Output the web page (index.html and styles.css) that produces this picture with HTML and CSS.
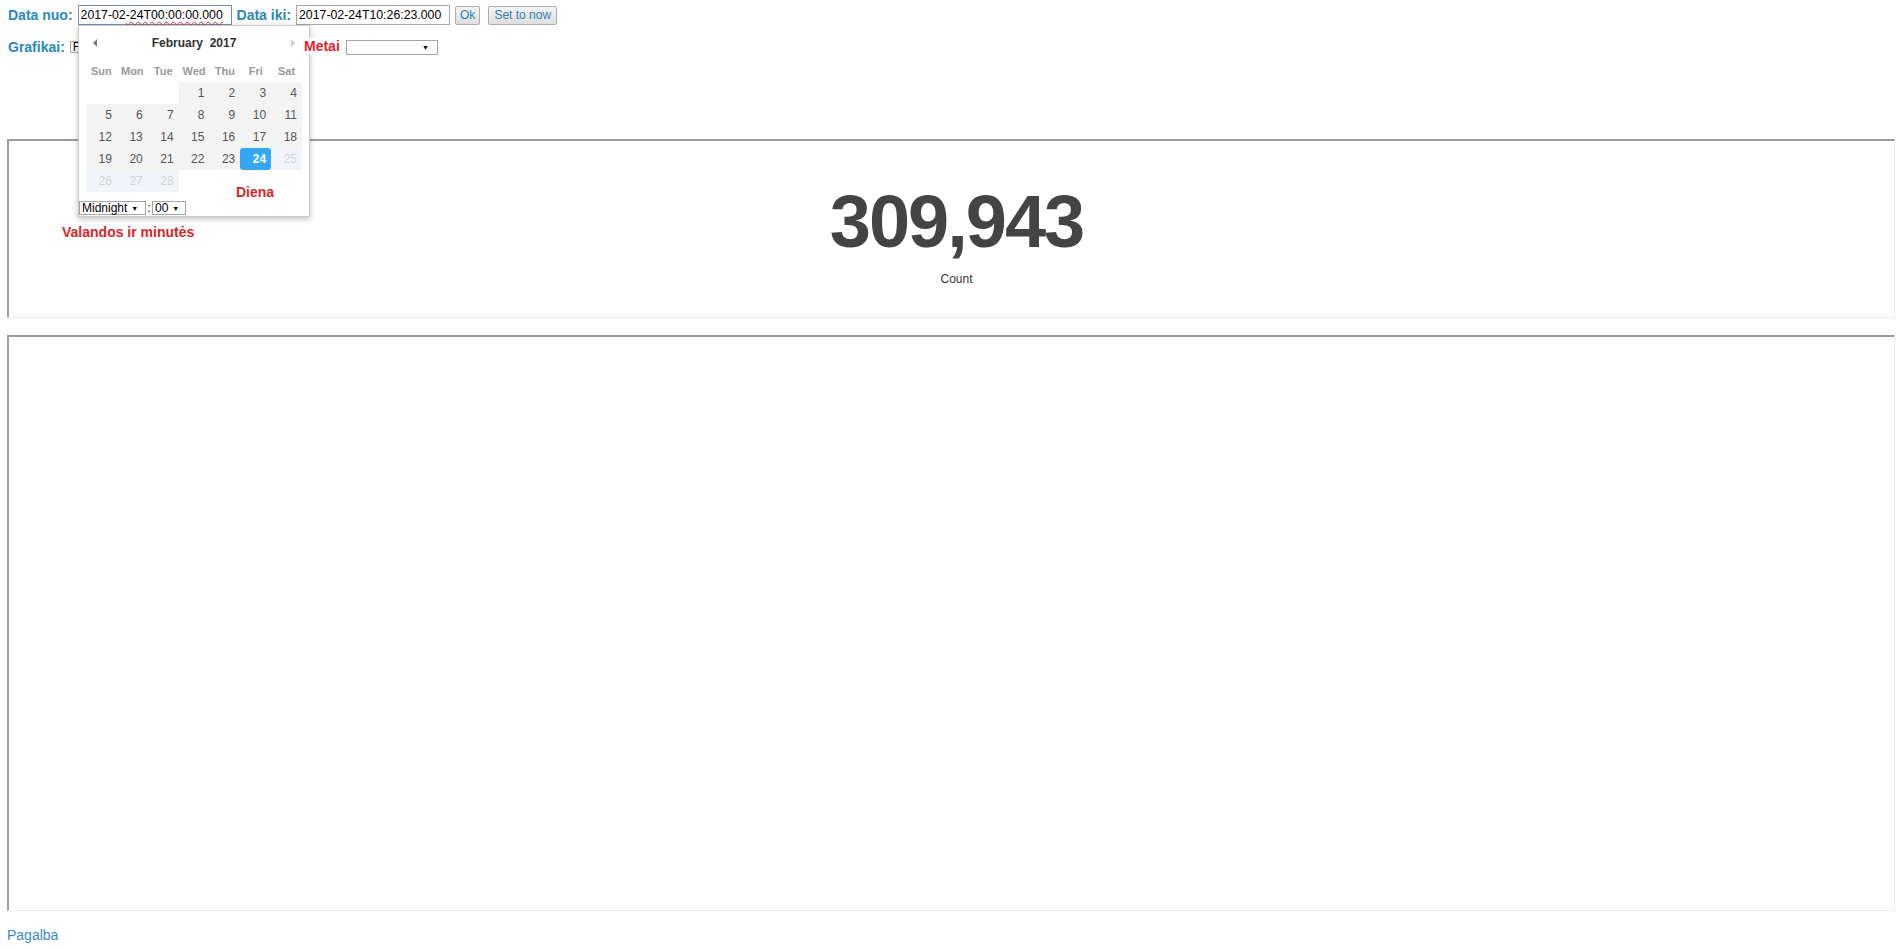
FILE: index.html
```html
<!DOCTYPE html>
<html lang="lt">
<head>
  <meta charset="UTF-8" />
  <meta name="viewport" content="width=device-width, initial-scale=1.0" />
  <title>Statistika</title>
  <link rel="stylesheet" href="styles.css">
</head>
<body>
  <div class="filters">
    <div class="row">
      <label>Data nuo:</label>
      <span class="field">
        <input class="date focused" type="text" value="2017-02-24T00:00:00.000">
        <span class="spell">2017-02<u>-24T00:00:00.000</u></span>
      </span>
      <label>Data iki:</label>
      <input class="date" type="text" value="2017-02-24T10:26:23.000">
      <button class="btn">Ok</button>
      <button class="btn now">Set to now</button>
    </div>
    <div class="row row-2">
      <label>Grafikai:</label>
      <div class="select charts">F</div>
      <div class="select years"><span></span><i>▼</i></div>
    </div>

    <div class="datepicker">
      <div class="dp-head">
        <span class="dp-prev"></span>
        <span class="dp-title">February&nbsp; 2017</span>
        <span class="dp-next"></span>
      </div>
      <table class="dp-days">
        <tr><th>Sun</th><th>Mon</th><th>Tue</th><th>Wed</th><th>Thu</th><th>Fri</th><th>Sat</th></tr>
        <tr><td class="empty"></td><td class="empty"></td><td class="empty"></td><td>1</td><td>2</td><td>3</td><td>4</td></tr>
        <tr><td>5</td><td>6</td><td>7</td><td>8</td><td>9</td><td>10</td><td>11</td></tr>
        <tr><td>12</td><td>13</td><td>14</td><td>15</td><td>16</td><td>17</td><td>18</td></tr>
        <tr><td>19</td><td>20</td><td>21</td><td>22</td><td>23</td><td class="active">24</td><td class="off">25</td></tr>
        <tr><td class="off">26</td><td class="off">27</td><td class="off">28</td><td class="empty"></td><td class="empty"></td><td class="empty"></td><td class="empty"></td></tr>
      </table>
      <div class="dp-time">
        <div class="select hours">Midnight <i>▼</i></div>
        <span class="colon">:</span>
        <div class="select minutes">00 <i>▼</i></div>
      </div>
      <span class="note note-day">Diena</span>
    </div>

    <span class="note note-year">Metai</span>
    <span class="note note-time">Valandos ir minutės</span>
  </div>

  <div class="panel metric">
    <div class="metric-value">309,943</div>
    <div class="metric-label">Count</div>
  </div>

  <div class="panel chart"></div>

  <a class="help" href="#">Pagalba</a>
</body>
</html>
```

FILE: styles.css
```css
:root {
  --label-color: #2a88b8;
  --note-color: #d8262b;
  --font-main: 'Liberation Sans', Arial, sans-serif;
}

* {
  box-sizing: border-box;
}

body {
  margin: 0;
  padding: 5px 3px 0 7px;
  font-family: var(--font-main);
  font-size: 12px;
  color: #333;
  background: #fff;
}

.filters {
  position: relative;
}

.row {
  display: flex;
  align-items: center;
  gap: 5px;
  height: 20px;
  padding-left: 1px;
}

.row-2 {
  margin-top: 14px;
  height: 16px;
}

.row label {
  font-size: 14px;
  font-weight: bold;
  color: var(--label-color);
}

.field {
  position: relative;
  display: inline-block;
  height: 20px;
}

.date {
  width: 154px;
  height: 20px;
  padding: 0 2px;
  border: 1px solid #a9a9a9;
  font-family: var(--font-main);
  font-size: 12.3px;
  color: #000;
  outline: none;
}

.date.focused {
  border-color: #6f8fb8;
}

/* browser spell check squiggle */
.spell {
  position: absolute;
  left: 3px;
  top: 1px;
  font-size: 12.3px;
  line-height: 18px;
  color: transparent;
  white-space: nowrap;
  pointer-events: none;
}

.spell u {
  text-decoration: underline wavy #e0303a;
  text-decoration-thickness: 1px;
  text-underline-offset: 2px;
}

.btn {
  height: 19px;
  padding: 0 4px;
  border: 1px solid #adadad;
  border-radius: 2px;
  background: linear-gradient(#f4f4f4, #dedede);
  font-family: var(--font-main);
  font-size: 12px;
  color: #2f80b2;
}

.btn.now {
  margin-left: 3px;
  padding: 0 5px;
}

.select {
  display: inline-flex;
  align-items: center;
  justify-content: space-between;
  height: 16px;
  padding: 0 3px 0 2px;
  border: 1px solid #a6a6a6;
  background: #fff;
  font-size: 12px;
  color: #000;
}

.select i {
  font-style: normal;
  font-size: 7px;
  margin-left: 4px;
}

.charts {
  width: 271px;
  height: 12px;
}

.years {
  width: 92px;
  height: 15px;
  padding-right: 8px;
}

/* date picker popup */
.datepicker {
  position: absolute;
  left: 71px;
  top: 20px;
  width: 232px;
  height: 192px;
  background: #fff;
  border: 1px solid #ccc;
  box-shadow: 0 2px 6px rgba(0,0,0,0.25);
  z-index: 10;
}

.dp-head {
  display: flex;
  align-items: center;
  justify-content: space-between;
  height: 34px;
  padding: 0 14px 0 14px;
}

.dp-prev,
.dp-next {
  width: 0;
  height: 0;
  border-top: 4px solid transparent;
  border-bottom: 4px solid transparent;
}

.dp-prev {
  border-right: 4px solid #777;
}

.dp-next {
  border-left: 4px solid #ccc;
}

.dp-title {
  font-weight: bold;
  font-size: 12px;
  color: #333;
}

.dp-days {
  margin: 0 7px;
  border-collapse: collapse;
}

.dp-days th {
  width: 31px;
  height: 22px;
  padding: 0;
  font-size: 11px;
  color: #999;
  text-align: center;
}

.dp-days td {
  width: 31px;
  height: 22px;
  padding: 0 5px 0 0;
  background: #f3f3f3;
  text-align: right;
  font-size: 12px;
  color: #555;
}

.dp-days td.empty {
  background: #fff;
}

.dp-days td.off {
  background: #f1f5fa;
  color: #cfd5dc;
}

.dp-days td.active {
  background: #33a6f4;
  border-radius: 3px;
  color: #fff;
  font-weight: bold;
}

.dp-time {
  display: flex;
  align-items: center;
  margin-top: 9px;
}

.hours {
  width: 67px;
  height: 14px;
  justify-content: flex-start;
}

.minutes {
  width: 34px;
  height: 14px;
  justify-content: flex-start;
}

.colon {
  width: 6px;
  text-align: center;
  color: #000;
}

/* red annotations */
.note {
  position: absolute;
  font-size: 14px;
  line-height: 16px;
  font-weight: bold;
  color: var(--note-color);
  background: #fff;
  z-index: 20;
}

.note-day {
  left: 157px;
  top: 158px;
}

.note-year {
  left: 296px;
  top: 33px;
  padding: 0 3px 0 1px;
}

.note-time {
  left: 55px;
  top: 219px;
}

/* panels */
.panel {
  border-style: solid;
  border-width: 2px 1px 1px 2px;
  border-color: #9c9c9c #ececec #ececec #9c9c9c;
}

.metric {
  height: 179px;
  margin-top: 84px;
  padding-top: 43px;
  padding-left: 10px;
  text-align: center;
}

.metric-value {
  font-size: 74px;
  line-height: 76px;
  font-weight: bold;
  letter-spacing: -2px;
  color: #444;
}

.metric-label {
  margin-top: 12px;
  font-size: 12px;
  line-height: 14px;
  color: #333;
}

.chart {
  height: 576px;
  margin-top: 17px;
}

.help {
  display: inline-block;
  margin-top: 16px;
  font-size: 14px;
  line-height: 16px;
  color: #3b88c0;
  text-decoration: none;
}
```
